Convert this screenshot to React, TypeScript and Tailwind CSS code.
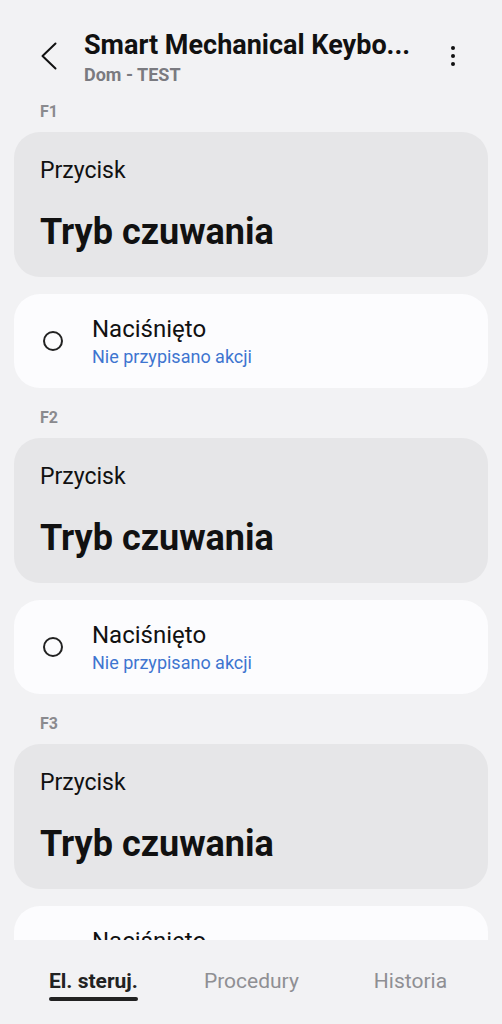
import React from "react";

const sections = ["F1", "F2", "F3"];

function Section({ label }: { label: string }) {
  return (
    <div className="flex flex-col">
      <div className="px-[40px] pt-[2px] h-[32px] text-[16px] font-bold text-[#8a8a8e] leading-[20px]">
        {label}
      </div>
      <div className="mx-[14px] h-[145px] rounded-[26px] bg-[#e6e6e8] px-[26px] pt-[24px]">
        <div className="text-[23px] leading-[30px] text-[#111]">Przycisk</div>
        <div className="mt-[24px] text-[36px] leading-[44px] font-bold text-[#111]">
          Tryb czuwania
        </div>
      </div>
      <div className="mx-[14px] mt-[17px] h-[94px] rounded-[26px] bg-[#fcfcfe] flex items-center">
        <div className="ml-[29px] w-[20px] h-[20px] rounded-full border-[2px] border-[#222]" />
        <div className="ml-[29px] flex flex-col">
          <div className="text-[24px] leading-[28px] text-[#111]">Naciśnięto</div>
          <div className="mt-[3px] text-[18px] leading-[22px] text-[#3e75d0]">Nie przypisano akcji</div>
        </div>
      </div>
      <div className="h-[18px]" />
    </div>
  );
}

export default function App() {
  return (
    <div
      className="w-[502px] h-[1024px] bg-[#f2f2f4] flex flex-col overflow-hidden"
      style={{ fontFamily: "Roboto, 'Noto Sans', sans-serif" }}
    >
      <div className="h-[100px] flex items-start pt-[29px] shrink-0">
        <div className="w-[84px] h-[53px] flex items-center pl-[40px]">
          <svg width="18" height="28" viewBox="0 0 18 28" fill="none">
            <path d="M15.5 1.5 L2.5 14 L15.5 26.5" stroke="#111" strokeWidth="2" strokeLinecap="round" strokeLinejoin="round" />
          </svg>
        </div>
        <div className="flex-1 min-w-0">
          <div className="text-[27px] leading-[32px] font-bold text-[#111] whitespace-nowrap">
            Smart Mechanical Keybo...
          </div>
          <div className="mt-[3px] text-[18px] leading-[22px] font-bold text-[#7a7a80]">Dom - TEST</div>
        </div>
        <div className="w-[40px] h-[53px] flex flex-col items-center justify-center gap-[4px] mr-[29px]">
          <span className="w-[4px] h-[4px] rounded-full bg-[#111]" />
          <span className="w-[4px] h-[4px] rounded-full bg-[#111]" />
          <span className="w-[4px] h-[4px] rounded-full bg-[#111]" />
        </div>
      </div>
      <div className="flex-1 overflow-hidden">
        {sections.map((s) => (
          <Section key={s} label={s} />
        ))}
      </div>
      <div className="h-[84px] shrink-0 flex items-start pt-[28px] text-[21px]">
        <div className="ml-[49px] flex flex-col">
          <span className="font-bold text-[#222] leading-[26px] whitespace-nowrap">El. steruj.</span>
          <span className="mt-[3px] h-[4px] bg-[#222] rounded-full" />
        </div>
        <span className="ml-[66px] text-[#8f8f93] leading-[26px] whitespace-nowrap">Procedury</span>
        <span className="ml-[75px] text-[#8f8f93] leading-[26px] whitespace-nowrap">Historia</span>
      </div>
    </div>
  );
}
